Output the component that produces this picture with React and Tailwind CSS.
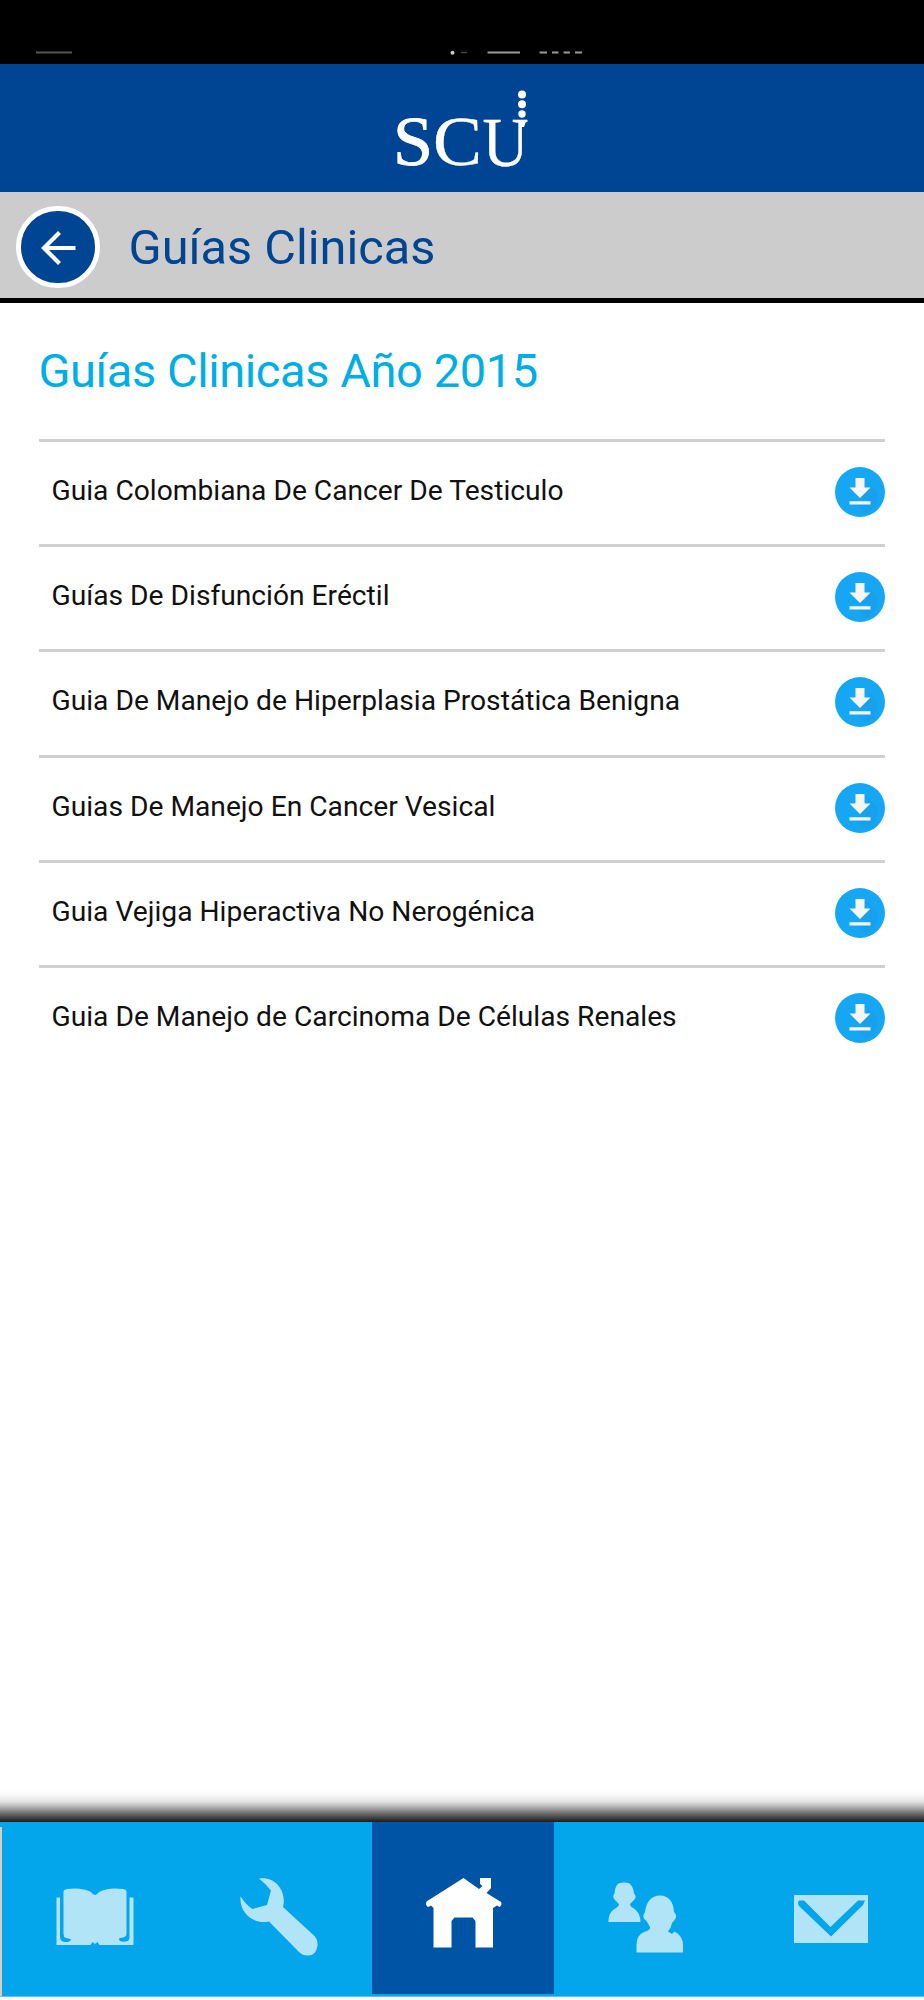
const guides = [
  "Guia Colombiana De Cancer De Testiculo",
  "Guías De Disfunción Eréctil",
  "Guia De Manejo de Hiperplasia Prostática Benigna",
  "Guias De Manejo En Cancer Vesical",
  "Guia Vejiga Hiperactiva No Nerogénica",
  "Guia De Manejo de Carcinoma De Células Renales",
];

function StatusBar() {
  return (
    <div className="h-16 bg-black">
      <svg className="block" width="924" height="64" viewBox="0 0 924 64" aria-hidden="true">
        <path d="M36 52.5h36" stroke="#555" strokeWidth="1.8" />
        <circle cx="452.5" cy="52.7" r="2" fill="#c8c8c8" />
        <path d="M461 52.5h6" stroke="#444" strokeWidth="1.5" />
        <path d="M487.500 52.500h32.500M539.500 52.500h7.500M552 52.500h6.500M563.500 52.500h6.500M575 52.500h7" stroke="#999" strokeWidth="2" />
      </svg>
    </div>
  );
}

function Logo() {
  return (
    <svg width="160" height="128" viewBox="0 0 160 128" className="mr-[4px]" aria-label="SCU">
      <g fill="#fff" fontFamily="'Liberation Serif', serif" fontSize="69">
        <text x="13" y="101" textLength="40" lengthAdjust="spacingAndGlyphs" stroke="#fff" strokeWidth=".8">S</text>
        <text x="53" y="101" textLength="49" lengthAdjust="spacingAndGlyphs" stroke="#fff" strokeWidth=".3">C</text>
        <text x="102.500" y="101.500" textLength="46" lengthAdjust="spacingAndGlyphs" stroke="#fff" strokeWidth=".3">U</text>
        <circle cx="142" cy="30.500" r="4" />
        <circle cx="142" cy="40.300" r="4" />
        <circle cx="142" cy="50" r="3.700" />
        <path d="M138.500 56H146.500L144 63H141.200Z" />
      </g>
    </svg>
  );
}

function DownloadIcon() {
  return (
    <svg width="50" height="50" viewBox="0 0 50 50" className="-mt-[2px]" aria-hidden="true">
      <circle cx="25" cy="25" r="25" fill="#15a7f4" />
      <path d="M29.500 11.500L42 24Q44 40 31 46L22 37.500H35.500V34L25 31L35 21Z" fill="#18a0ec" />
      <path d="M20.500 11h9v9.500h6L25 31L14.500 20.500h6z M14.500 34.200h21v3.300h-21z" fill="#f6f6f6" />
    </svg>
  );
}

function BookIcon() {
  return (
    <svg width="78" height="58" viewBox="0 0 78 58" aria-hidden="true">
      <path fill="#b2e4f8" d="M7.500 4Q7.500 1.500 11 1Q26-1 35 4Q37 7 39 7Q41 7 43 4Q52-1 67 1Q70.500 1.500 70.500 4V46Q70.500 49.500 64 50Q62 51 64 53Q66 54 70 53.500Q73.500 53 73.500 49V9.500H77.500V57H43.500L41.500 54L39 56L36.500 54L34.500 57H.500V9.500H4V49Q4 53 8 54Q14 54.500 15 51.500Q13 50 10 50Q7.500 49 7.500 46Z" />
    </svg>
  );
}

function WrenchIcon() {
  return (
    <svg width="78" height="78" viewBox="0 0 78 78" aria-hidden="true">
      <path fill="#b2e4f8" d="M19 .500C36-2 47 14 43 29L75 58.500Q78 62 77.500 68Q76 77 69 77.500Q63 78 59 74L29 43.500C14 47-1 35 .500 18.500Q6 27 12.500 31L27 27L31 12.500Q26 6 19 .500Z" />
    </svg>
  );
}

function HomeIcon() {
  return (
    <svg width="78" height="70" viewBox="0 0 78 70" aria-hidden="true">
      <path fill="#fff" d="M38.500 0L54 11L57.500 8L55 6V0H66V10L61.500 15L76 24Q77.500 27 74.500 29L72 27.500L68 30V69.500H50.500V43L47.500 39.500H29.500L26.500 43V69.500H8.500V30L6 27.500L3 29Q0 27 1.500 23.500Z" />
    </svg>
  );
}

function PeopleIcon() {
  return (
    <svg width="76" height="72" viewBox="0 0 76 72" aria-hidden="true">
      <path fill="#b2e4f8" d="M10.500 1.500Q16-.5 21.500 1.500Q25.500 5 26 11.500Q29 14 26.500 17.500L22 22Q22 24.500 26 26.500Q32.500 31 32.500 40H.500Q0 31 7 26.500Q11 24.500 11 22L6.500 17.500Q4 14 6.500 11.500Q7 4 10.500 1.500Z" />
      <path fill="#b2e4f8" d="M52 13.500Q65 14 66 30Q70 34 66.500 38L64 41Q63 46 60 49.500L64 52L66.500 49.500Q75 54 75 63V70.500H28.500V63Q28.500 53 36 50Q43 48 42 45L38.500 39Q33 36 37 30Q39 14 52 13.500Z" />
    </svg>
  );
}

function MailIcon() {
  return (
    <svg width="74" height="48" viewBox="0 0 74 48" aria-hidden="true">
      <path fill="#b2e4f8" d="M0 0h74v48H0z" />
      <path fill="#03a6eb" d="M5 5.500H10L36.500 32L64 5.500H71L69 10L37 41.500L5 11Q3 8 5 5.500Z" />
    </svg>
  );
}

export default function App() {
  return (
    <div className="flex h-[2000px] w-[924px] flex-col overflow-hidden bg-white font-['Roboto',sans-serif]">
      <StatusBar />
      <header className="flex h-32 items-center justify-center bg-[#004593]">
        <Logo />
      </header>
      <div className="flex h-[111px] items-start border-b-[5px] border-black bg-[#cccccc] pl-4 pt-[14px]">
        <button className="flex h-[82px] w-[84px] items-center justify-center rounded-full border-[5px] border-white bg-[#004593]" aria-label="Volver">
          <svg width="36" height="36" viewBox="0 0 36 36" className="mt-[1px] -ml-[1px]" fill="none" stroke="#fff" strokeWidth="4.2" aria-hidden="true">
            <path d="M35.500 18H4M19.500 2.500L4 18L19.500 33.500" />
          </svg>
        </button>
        <h1 className="ml-[28.500px] mt-[13px] text-[48.700px] leading-[58px] whitespace-nowrap text-[#004593]">Guías Clinicas</h1>
      </div>
      <main className="flex-1 px-[39px]">
        <h2 className="-ml-[0.500px] flex h-[136px] items-center text-[47px] tracking-[-0.410px] whitespace-nowrap text-[#00aee6]">Guías Clinicas Año 2015</h2>
        <ul>
          {guides.map((name) => (
            <li key={name} className="flex h-[105.200px] items-center justify-between border-t-[3px] border-[#d0d0d0] pl-[12.500px]">
              <span className="-mt-[4px] text-[28.200px] whitespace-nowrap text-[#111]">{name}</span>
              <DownloadIcon />
            </li>
          ))}
        </ul>
      </main>
      <div className="h-[32px] bg-[linear-gradient(to_top,#1c1c1c_0px,#666_8px,#b2b2b2_15px,#e0e0e0_20px,#f9f9f9_27px,#fff_32px)]" />
      <nav className="mb-[3px] flex h-[175px] border-b border-[#5cc6f2] bg-[#03a6eb]">
        <div className="mt-[5px] w-[2px] bg-[#d8cdc5]" />
        <a className="flex w-[184px] pl-[53.500px] pt-[66px]"><BookIcon /></a>
        <a className="flex w-[185.500px] pl-[54px] pt-[56px]"><WrenchIcon /></a>
        <a className="flex h-[172px] w-[182px] bg-[#0054a6] pl-[53.500px] pt-[56px]"><HomeIcon /></a>
        <a className="flex w-[185px] pl-[54.500px] pt-[60px]"><PeopleIcon /></a>
        <a className="flex flex-1 pl-[55px] pt-[73px]"><MailIcon /></a>
      </nav>
    </div>
  );
}
